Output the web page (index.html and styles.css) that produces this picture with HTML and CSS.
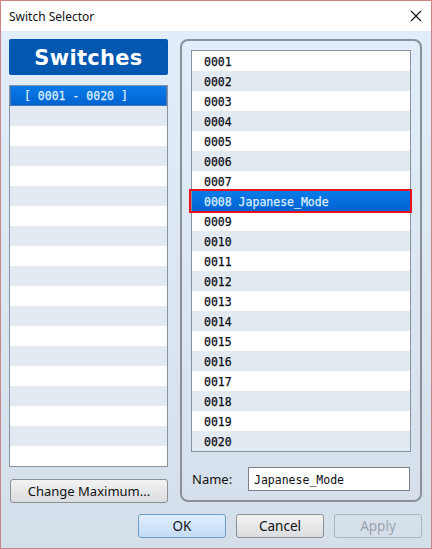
FILE: index.html
```html
<!DOCTYPE html>
<html>
<head>
<meta charset="utf-8">
<link rel="stylesheet" href="styles.css">
</head>
<body>
<div class="window">
  <div class="titlebar">
    <span class="title">Switch Selector</span>
    <svg class="close" width="12" height="12" viewBox="0 0 12 12"><path d="M1 1L11 11M11 1L1 11" stroke="#111" stroke-width="1.1" fill="none"/></svg>
  </div>
  <div class="content">
    <div class="main">
      <div class="left">
        <div class="header">Switches</div>
        <div class="list left-list">
          <div class="row sel">[ 0001 - 0020 ]</div>
          <div class="row"></div><div class="row"></div><div class="row"></div><div class="row"></div><div class="row"></div><div class="row"></div>
          <div class="row"></div><div class="row"></div><div class="row"></div><div class="row"></div><div class="row"></div><div class="row"></div>
          <div class="row"></div><div class="row"></div><div class="row"></div><div class="row"></div><div class="row"></div><div class="row"></div>
        </div>
        <button class="btn wide">Change Maximum...</button>
      </div>
      <div class="group">
        <div class="list right-list">
          <div class="row">0001</div>
          <div class="row">0002</div>
          <div class="row">0003</div>
          <div class="row">0004</div>
          <div class="row">0005</div>
          <div class="row">0006</div>
          <div class="row">0007</div>
          <div class="row sel focus">0008 Japanese_Mode</div>
          <div class="row">0009</div>
          <div class="row">0010</div>
          <div class="row">0011</div>
          <div class="row">0012</div>
          <div class="row">0013</div>
          <div class="row">0014</div>
          <div class="row">0015</div>
          <div class="row">0016</div>
          <div class="row">0017</div>
          <div class="row">0018</div>
          <div class="row">0019</div>
          <div class="row">0020</div>
        </div>
        <div class="name-row">
          <span class="name-label">Name:</span>
          <div class="input">Japanese_Mode</div>
        </div>
      </div>
    </div>
    <div class="buttons">
      <button class="btn ok">OK</button>
      <button class="btn">Cancel</button>
      <button class="btn disabled">Apply</button>
    </div>
  </div>
</div>
</body>
</html>
```
FILE: styles.css
```css
* { box-sizing: border-box; }
html, body { margin: 0; padding: 0; }
body { width: 432px; height: 549px; overflow: hidden; font-family: "Noto Sans", "DejaVu Sans", sans-serif; }

.window {
  width: 432px;
  height: 549px;
  border: 1px solid #c98587;
  display: flex;
  flex-direction: column;
  background: linear-gradient(#e3eefc, #d5dfea);
}

.titlebar {
  height: 30px;
  background: #fff;
  display: flex;
  align-items: center;
  justify-content: space-between;
  padding: 0 9px 0 8px;
  flex: none;
}
.title { font-size: 12px; color: #111; }
.close { display: block; }

.content {
  flex: 1;
  display: flex;
  flex-direction: column;
  padding: 8px 9px 0 8px;
}

.main { display: flex; gap: 12px; }

.left { width: 160px; display: flex; flex-direction: column; }

.header {
  height: 36px;
  background: #0257b1;
  border-radius: 2px;
  color: #fff;
  font-family: "DejaVu Sans", sans-serif;
  font-weight: bold;
  font-size: 21px;
  display: flex;
  align-items: center;
  justify-content: center;
  letter-spacing: 0.3px;
  padding-top: 1px;
}

.list {
  background: #fff;
  border: 1px solid #8893a0;
  font-family: "DejaVu Sans Mono", monospace;
  font-size: 11.5px;
  color: #0c0f16;
  -webkit-text-stroke: 0.25px currentColor;
}
.row {
  height: 20px;
  line-height: 23px;
  padding-left: 12px;
  white-space: nowrap;
}
.row:nth-child(even) { background: #e3e9f0; }
.row.sel {
  background: linear-gradient(#0a7bea, #0063d0);
  color: #dcefff;
}

.left-list { margin-top: 10px; height: 382px; overflow: hidden; }
.left-list .row.sel { padding-left: 13px; border: 1px solid #3f78b8; border-top: none; line-height: 21px; }

.btn {
  font-family: "Noto Sans", "DejaVu Sans", sans-serif;
  font-size: 13.5px;
  color: #111;
  height: 24px;
  border: 1px solid #8c8f94;
  border-radius: 3px;
  background: linear-gradient(#f3f3f3, #dadcdf);
  padding: 0;
}
.wide { margin-top: 12px; margin-left: 1px; width: 158px; font-size: 13px; }

.group {
  width: 242px;
  height: 463px;
  border: 2px solid #8a9199;
  border-radius: 8px;
  padding: 9px 9px 0 9px;
  display: flex;
  flex-direction: column;
}
.right-list { height: 402px; width: 220px; }
.row.focus { position: relative; }
.row.focus::after {
  content: "";
  position: absolute;
  left: -3px;
  right: -2px;
  top: -2px;
  bottom: -2px;
  border: 2px solid #e8101c;
}

.name-row {
  display: flex;
  align-items: center;
  margin-top: 15px;
  padding-left: 1px;
}
.name-label { font-size: 13px; color: #111; width: 56px; }
.input {
  width: 162px;
  height: 24px;
  background: #fff;
  border: 1px solid #7c8088;
  font-family: "DejaVu Sans Mono", monospace;
  font-size: 11.5px;
  line-height: 24px;
  padding-left: 5px;
  color: #0c0f16;
}

.buttons {
  display: flex;
  justify-content: flex-end;
  gap: 10px;
  margin-top: 11px;
}
.buttons .btn { width: 88px; height: 24px; }
.btn.ok {
  background: linear-gradient(#e1effd, #c2dcf5);
  border-color: #6d9ccc;
}
.btn.disabled {
  background: transparent;
  border-color: #aeb6bf;
  color: #9aa3ad;
}
```
